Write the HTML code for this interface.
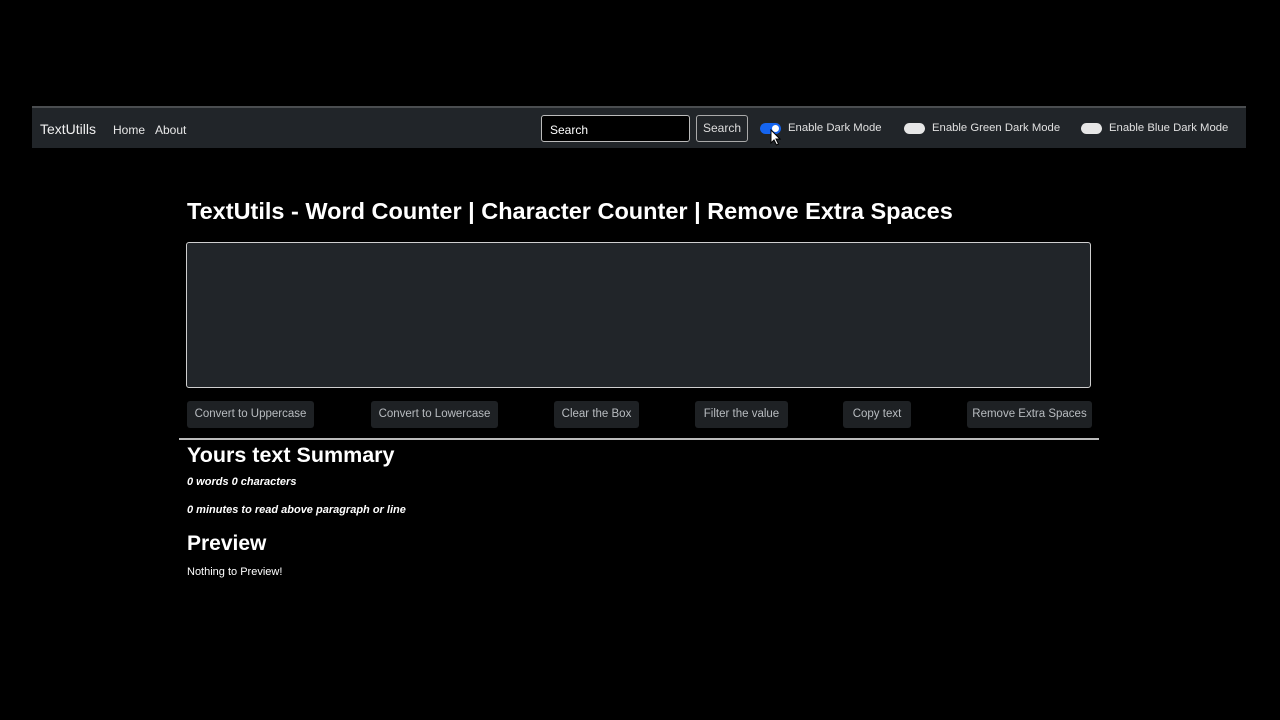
<!DOCTYPE html>
<html><head><style>
body{margin:0;width:1280px;height:720px;background:#000;font-family:"Liberation Sans",sans-serif;color:#fff;position:relative;overflow:hidden}
.a{position:absolute;white-space:nowrap}
.nav{left:32px;top:106px;width:1214px;height:40px;background:#212529;border-top:2px solid #4a4d50}
.btn{position:absolute;top:401px;height:27px;background:#1e2124;color:#b8bcc0;font-size:11.5px;line-height:27px;text-align:center;border-radius:3px}
.tg{position:absolute;top:123px;width:21px;height:11px;border-radius:6px;background:#e6e6e6}
.tg i{position:absolute;top:2px;left:2px;width:7px;height:7px;border-radius:50%;background:#999}
.lb{position:absolute;top:122px;font-size:11.3px;color:#e0e0e0;white-space:nowrap}
</style></head><body>
<div class="a nav"></div>
<div class="a" style="left:40px;top:121px;font-size:14px;color:#f0f0f0">TextUtills</div>
<div class="a" style="left:113px;top:123px;font-size:12px;color:#e8e8e8">Home</div>
<div class="a" style="left:155px;top:123px;font-size:12px;color:#e8e8e8">About</div>
<div class="a" style="left:541px;top:115px;width:147px;height:25px;background:#000;border:1px solid #bbb;border-radius:3px"></div>
<div class="a" style="left:550px;top:123px;font-size:12px">Search</div>
<div class="a" style="left:696px;top:115px;width:50px;height:25px;border:1px solid #aaa;border-radius:3px;font-size:12px;line-height:25px;text-align:center;color:#ddd">Search</div>
<div class="tg" style="left:760px;background:#1565f0"><i style="left:12px;background:#fff"></i></div>
<div class="lb" style="left:788px">Enable Dark Mode</div>
<div class="tg" style="left:904px"></div>
<div class="lb" style="left:932px">Enable Green Dark Mode</div>
<div class="tg" style="left:1081px"></div>
<div class="lb" style="left:1109px">Enable Blue Dark Mode</div>
<svg class="a" style="left:770px;top:129px" width="11" height="17" viewBox="0 0 11 17"><path d="M1 1L1 14L4 11L6.5 16L8.5 15L6 10L10 10Z" fill="#fff" stroke="#000" stroke-width="1"/></svg>
<div class="a" style="left:187px;top:198px;font-size:23.5px;font-weight:bold">TextUtils - Word Counter | Character Counter | Remove Extra Spaces</div>
<div class="a" style="left:186px;top:242px;width:903px;height:144px;background:#212529;border:1px solid #cfcfcf;border-radius:3px"></div>
<div class="btn" style="left:187px;width:127px">Convert to Uppercase</div>
<div class="btn" style="left:371px;width:127px">Convert to Lowercase</div>
<div class="btn" style="left:554px;width:85px">Clear the Box</div>
<div class="btn" style="left:695px;width:93px">Filter the value</div>
<div class="btn" style="left:843px;width:68px">Copy text</div>
<div class="btn" style="left:967px;width:125px">Remove Extra Spaces</div>
<div class="a" style="left:179px;top:438px;width:920px;height:2px;background:#bbb"></div>
<div class="a" style="left:187px;top:443px;font-size:21.5px;font-weight:bold">Yours text Summary</div>
<div class="a" style="left:187px;top:476px;font-size:11px;font-weight:bold;font-style:italic">0 words 0 characters</div>
<div class="a" style="left:187px;top:504px;font-size:11px;font-weight:bold;font-style:italic">0 minutes to read above paragraph or line</div>
<div class="a" style="left:187px;top:532px;font-size:21px;font-weight:bold">Preview</div>
<div class="a" style="left:187px;top:566px;font-size:11px">Nothing to Preview!</div>
</body></html>
